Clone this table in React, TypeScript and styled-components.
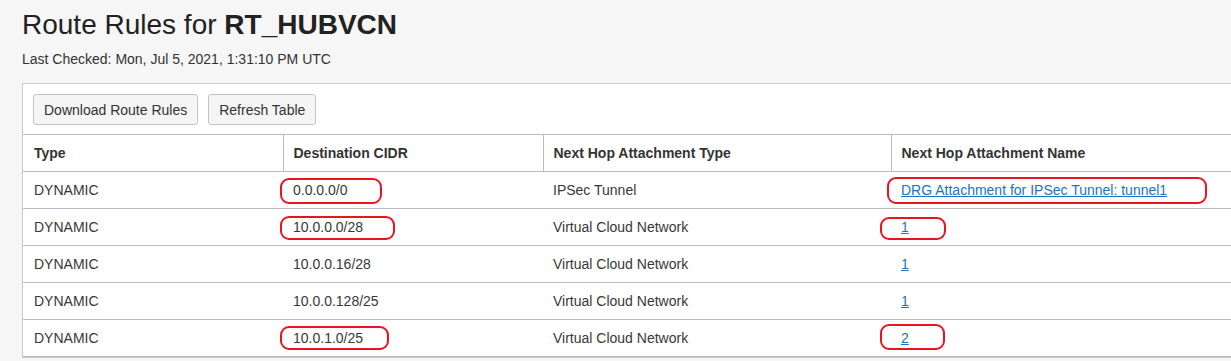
import React from 'react';
import styled, { createGlobalStyle } from 'styled-components';

const GlobalStyle = createGlobalStyle`
  html, body {
    margin: 0;
    padding: 0;
    background: #f6f6f6;
    overflow: hidden;
  }
  body {
    font-family: "Liberation Sans", Arial, sans-serif;
    color: #333;
  }
`;

const Page = styled.div`
  padding: 0 0 0 22px;
`;

const Title = styled.h1`
  margin: 0;
  padding-top: 8px;
  font-size: 28px;
  font-weight: normal;
  line-height: 34px;
  color: #222;

  b {
    font-weight: bold;
  }
`;

const Checked = styled.div`
  margin-top: 9px;
  font-size: 14px;
  line-height: 16px;
  color: #333;
`;

const Panel = styled.div`
  margin-top: 16px;
  width: 1260px;
  background: #fff;
  border: 1px solid #c8c8c8;
  border-right: none;
`;

const Toolbar = styled.div`
  display: flex;
  gap: 10px;
  padding: 10px 10px 9px;
`;

const Button = styled.button`
  height: 31px;
  padding: 0 10px;
  font-family: inherit;
  font-size: 14px;
  color: #333;
  background: #f5f5f5;
  border: 1px solid #c4c4c4;
  border-radius: 3px;
`;

const Table = styled.table`
  width: 100%;
  border-collapse: collapse;
  table-layout: fixed;
  font-size: 14px;
`;

const Th = styled.th<{ $w?: number; $last?: boolean }>`
  box-sizing: border-box;
  width: ${p => (p.$w ? `${p.$w}px` : 'auto')};
  height: 37px;
  padding: 0 10px;
  text-align: left;
  font-weight: bold;
  color: #333;
  border-top: 1px solid #b9bdc2;
  border-bottom: 1px solid #b9bdc2;
  border-right: ${p => (p.$last ? 'none' : '1px solid #b9bdc2')};

  &:first-child {
    padding-left: 11px;
  }
`;

const Td = styled.td`
  position: relative;
  height: 36px;
  padding: 0 10px;
  color: #383838;
  border-bottom: 1px solid #b9bdc2;

  &:first-child {
    padding-left: 11px;
  }
`;

const Link = styled.a`
  color: #1a73c9;
  text-decoration: underline;
  cursor: pointer;
`;

const Mark = styled.span<{ $l: number; $t: number; $w: number; $h: number }>`
  position: absolute;
  left: ${p => p.$l}px;
  top: ${p => p.$t}px;
  width: ${p => p.$w}px;
  height: ${p => p.$h}px;
  box-sizing: border-box;
  border: 2px solid #e8141f;
  border-radius: 9px;
  pointer-events: none;
`;

type Box = [number, number, number, number];

interface Row {
  cidr: string;
  type: string;
  name: string;
  cidrMark?: Box;
  nameMark?: Box;
}

const rows: Row[] = [
  { cidr: '0.0.0.0/0', type: 'IPSec Tunnel', name: 'DRG Attachment for IPSec Tunnel: tunnel1', cidrMark: [-3, 6, 102, 26], nameMark: [-4, 5, 320, 27] },
  { cidr: '10.0.0.0/28', type: 'Virtual Cloud Network', name: '1', cidrMark: [-3, 7, 115, 24], nameMark: [-11, 8, 66, 23] },
  { cidr: '10.0.0.16/28', type: 'Virtual Cloud Network', name: '1' },
  { cidr: '10.0.0.128/25', type: 'Virtual Cloud Network', name: '1' },
  { cidr: '10.0.1.0/25', type: 'Virtual Cloud Network', name: '2', cidrMark: [-3, 6, 109, 24], nameMark: [-11, 4, 65, 26] },
];

const Marked: React.FC<{ box?: Box }> = ({ box }) =>
  box ? <Mark $l={box[0]} $t={box[1]} $w={box[2]} $h={box[3]} /> : null;

export default function App() {
  return (
    <Page>
      <GlobalStyle />
      <Title>
        Route Rules for <b>RT_HUBVCN</b>
      </Title>
      <Checked>Last Checked: Mon, Jul 5, 2021, 1:31:10 PM UTC</Checked>
      <Panel>
        <Toolbar>
          <Button>Download Route Rules</Button>
          <Button>Refresh Table</Button>
        </Toolbar>
        <Table>
          <thead>
            <tr>
              <Th $w={260}>Type</Th>
              <Th $w={260}>Destination CIDR</Th>
              <Th $w={348}>Next Hop Attachment Type</Th>
              <Th $last>Next Hop Attachment Name</Th>
            </tr>
          </thead>
          <tbody>
            {rows.map((r, i) => (
              <tr key={i}>
                <Td>DYNAMIC</Td>
                <Td>
                  <Marked box={r.cidrMark} />
                  {r.cidr}
                </Td>
                <Td>{r.type}</Td>
                <Td>
                  <Marked box={r.nameMark} />
                  <Link>{r.name}</Link>
                </Td>
              </tr>
            ))}
          </tbody>
        </Table>
      </Panel>
    </Page>
  );
}
